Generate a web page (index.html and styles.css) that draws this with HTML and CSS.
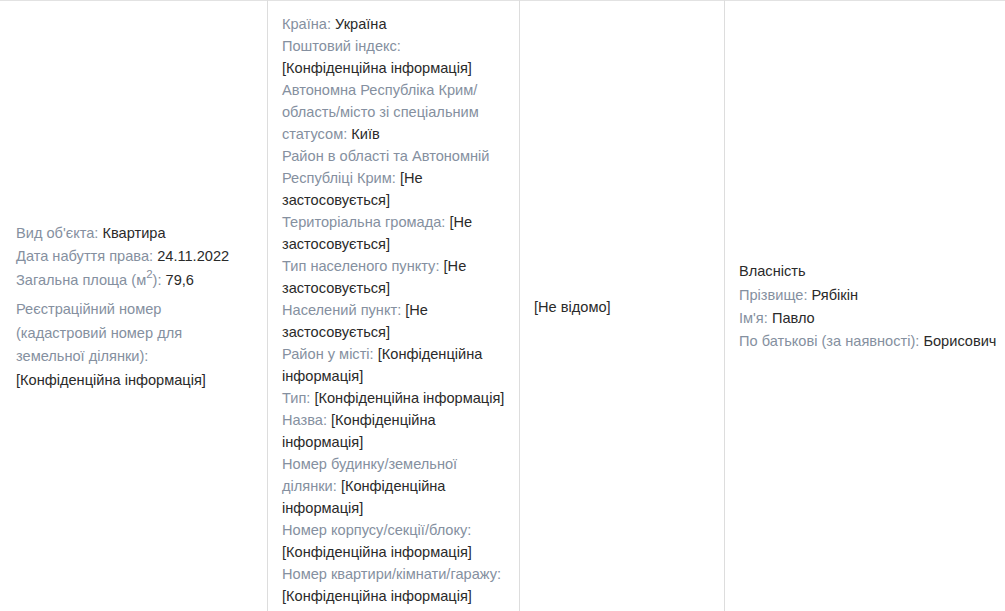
FILE: index.html
```html
<!DOCTYPE html>
<html lang="uk">
<head>
<meta charset="utf-8">
<title>Реєстр</title>
<link rel="stylesheet" href="styles.css">
</head>
<body>
<table class="reg-table">
  <tr>
    <td class="cell cell-object">
      <div class="item"><span class="lbl">Вид об'єкта:</span> Квартира</div>
      <div class="item"><span class="lbl">Дата набуття права:</span> 24.11.2022</div>
      <div class="item"><span class="lbl">Загальна площа (м<sup>2</sup>):</span> 79,6</div>
      <div class="item item-gap"><span class="lbl">Реєстраційний номер (кадастровий номер для земельної ділянки):</span> [Конфіденційна інформація]</div>
    </td>
    <td class="cell cell-address">
      <div class="addr">
        <span class="lbl">Країна:</span> Україна<br>
        <span class="lbl">Поштовий індекс:</span> [Конфіденційна інформація]<br>
        <span class="lbl">Автономна Республіка Крим/ область/місто зі спеціальним статусом:</span> Київ<br>
        <span class="lbl">Район в області та Автономній Республіці Крим:</span> [Не застосовується]<br>
        <span class="lbl">Територіальна громада:</span> [Не застосовується]<br>
        <span class="lbl">Тип населеного пункту:</span> [Не застосовується]<br>
        <span class="lbl">Населений пункт:</span> [Не застосовується]<br>
        <span class="lbl">Район у місті:</span> [Конфіденційна інформація]<br>
        <span class="lbl">Тип:</span> [Конфіденційна інформація]<br>
        <span class="lbl">Назва:</span> [Конфіденційна інформація]<br>
        <span class="lbl">Номер будинку/земельної ділянки:</span> [Конфіденційна інформація]<br>
        <span class="lbl">Номер корпусу/секції/блоку:</span> [Конфіденційна інформація]<br>
        <span class="lbl">Номер квартири/кімнати/гаражу:</span> [Конфіденційна інформація]
      </div>
    </td>
    <td class="cell cell-status">[Не відомо]</td>
    <td class="cell cell-owner">
      <div class="item">Власність</div>
      <div class="item"><span class="lbl">Прізвище:</span> Рябікін</div>
      <div class="item"><span class="lbl">Ім'я:</span> Павло</div>
      <div class="item nowrap"><span class="lbl">По батькові (за наявності):</span> Борисович</div>
    </td>
  </tr>
</table>
</body>
</html>
```

FILE: styles.css
```css
html, body {
  margin: 0;
  padding: 0;
  overflow: hidden;
  background: #fff;
}

body {
  font-family: "Liberation Sans", Arial, sans-serif;
  font-size: 14.6px;
  color: #2a2a2a;
}

.reg-table {
  border-collapse: collapse;
  table-layout: fixed;
  width: 1040px;
  border-top: 1px solid #e2e2e2;
}

.cell {
  vertical-align: middle;
  padding: 12px 15px 10px 14px;
  border-left: 1px solid #dddddd;
  line-height: 23.4px;
}

.cell-object {
  width: 226px;
  padding-left: 16px;
  padding-right: 25px;
  padding-bottom: 16px;
  border-left: none;
}

.cell-address {
  width: 225px;
  padding-left: 14px;
  padding-right: 12px;
}

.cell-status {
  width: 175px;
  padding-bottom: 14px;
}

.cell-owner {
  padding-bottom: 16px;
}

.addr {
  line-height: 22px;
}

.lbl {
  color: #8590a0;
}

.item-gap {
  margin-top: 6px;
}

sup {
  font-size: 11.5px;
  line-height: 0;
  vertical-align: 7px;
}

.nowrap {
  white-space: nowrap;
}
```
